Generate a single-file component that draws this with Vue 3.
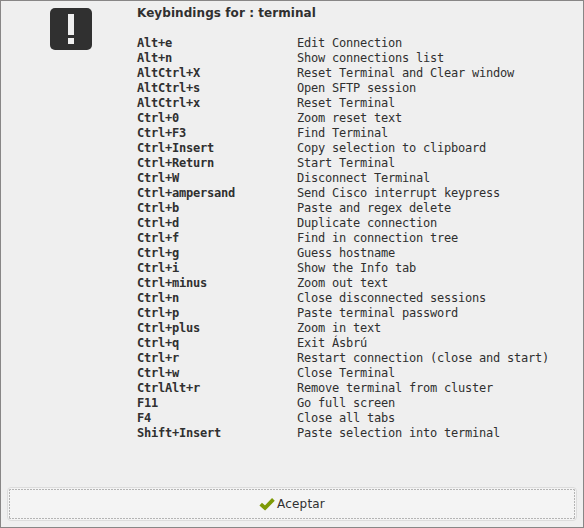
<script setup>
const bindings = [
  ['Alt+e', 'Edit Connection'],
  ['Alt+n', 'Show connections list'],
  ['AltCtrl+X', 'Reset Terminal and Clear window'],
  ['AltCtrl+s', 'Open SFTP session'],
  ['AltCtrl+x', 'Reset Terminal'],
  ['Ctrl+0', 'Zoom reset text'],
  ['Ctrl+F3', 'Find Terminal'],
  ['Ctrl+Insert', 'Copy selection to clipboard'],
  ['Ctrl+Return', 'Start Terminal'],
  ['Ctrl+W', 'Disconnect Terminal'],
  ['Ctrl+ampersand', 'Send Cisco interrupt keypress'],
  ['Ctrl+b', 'Paste and regex delete'],
  ['Ctrl+d', 'Duplicate connection'],
  ['Ctrl+f', 'Find in connection tree'],
  ['Ctrl+g', 'Guess hostname'],
  ['Ctrl+i', 'Show the Info tab'],
  ['Ctrl+minus', 'Zoom out text'],
  ['Ctrl+n', 'Close disconnected sessions'],
  ['Ctrl+p', 'Paste terminal password'],
  ['Ctrl+plus', 'Zoom in text'],
  ['Ctrl+q', 'Exit Ásbrú'],
  ['Ctrl+r', 'Restart connection (close and start)'],
  ['Ctrl+w', 'Close Terminal'],
  ['CtrlAlt+r', 'Remove terminal from cluster'],
  ['F11', 'Go full screen'],
  ['F4', 'Close all tabs'],
  ['Shift+Insert', 'Paste selection into terminal'],
]
</script>

<template>
  <div class="dialog">
    <div class="content">
      <svg class="icon" width="42" height="42" viewBox="0 0 42 42">
        <rect width="42" height="42" rx="5" fill="#303030" />
        <path d="M18 6h6v21h-6zM18 30h6v6h-6z" fill="#efefef" />
      </svg>
      <div class="message">
        <h1 class="title">Keybindings for : terminal</h1>
        <dl class="list">
          <template v-for="[keys, action] in bindings" :key="keys">
            <dt>{{ keys }}</dt>
            <dd>{{ action }}</dd>
          </template>
        </dl>
      </div>
    </div>
    <button class="accept" type="button">
      <span class="focus">
        <svg class="check" width="16" height="14" viewBox="0 0 16 14">
          <path d="M1.7 7.2 6 11 14.4 2.4" fill="none" stroke="#7d9a06" stroke-width="3.8" />
        </svg>
        <span class="label">Aceptar</span>
      </span>
    </button>
  </div>
</template>

<style>
body {
  margin: 0;
}
</style>

<style scoped>
.dialog {
  box-sizing: border-box;
  width: 584px;
  height: 528px;
  padding: 7px 6px 6px;
  border: 1px solid #888686;
  background: #efefef;
  color: #303030;
  font: 12px/15px "DejaVu Sans", sans-serif;
  display: flex;
  flex-direction: column;
  justify-content: space-between;
}
.content {
  display: flex;
  gap: 45px;
  padding-left: 43px;
}
.icon {
  flex: none;
}
.message {
  margin-top: -2px;
}
.title {
  margin: 0 0 15px;
  font-size: 12px;
  line-height: 15px;
  font-weight: bold;
  letter-spacing: 0.07px;
}
.list {
  margin: 0;
  display: grid;
  grid-template-columns: 160px auto;
  grid-auto-rows: 15px;
  font-family: "DejaVu Sans Mono", monospace;
  letter-spacing: -0.2246px;
  white-space: nowrap;
}
dt {
  font-weight: bold;
}
dd {
  margin: 0;
}
.accept {
  box-sizing: border-box;
  height: 34px;
  padding: 1px;
  border: 1px solid #dcdcdc;
  border-radius: 4px;
  background: #f4f4f4;
  color: #303030;
  font: inherit;
  display: flex;
}
.focus {
  --dash: #b4b4b4 0 2px, transparent 2px 3px;
  flex: 1;
  border-radius: 1px;
  background:
    repeating-linear-gradient(90deg, var(--dash)) top / 100% 1px no-repeat,
    repeating-linear-gradient(90deg, var(--dash)) bottom / 100% 1px no-repeat,
    repeating-linear-gradient(180deg, var(--dash)) left / 1px 100% no-repeat,
    repeating-linear-gradient(180deg, var(--dash)) right / 1px 100% no-repeat;
  display: flex;
  align-items: center;
  justify-content: center;
  gap: 2px;
}
.check {
  flex: none;
}
.label {
  letter-spacing: 0.2px;
}
</style>
